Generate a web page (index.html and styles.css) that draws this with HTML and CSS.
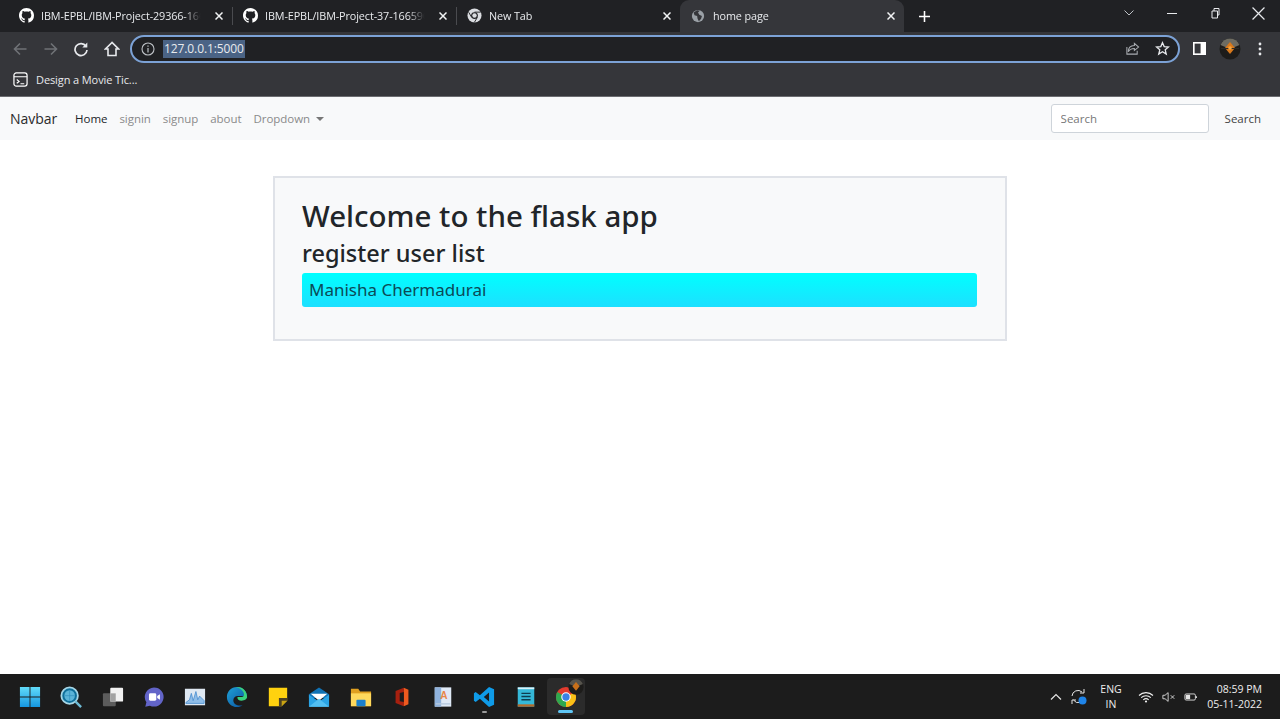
FILE: index.html
```html
<!DOCTYPE html>
<html lang="en">
<head>
<meta charset="utf-8">
<title>home page</title>
<link rel="stylesheet" href="styles.css">
</head>
<body>
<header class="chrome">
  <div class="tabstrip">
    <div class="tab">
      <svg class="fav" viewBox="0 0 16 16"><path fill="#fff" d="M8 0C3.58 0 0 3.58 0 8c0 3.54 2.29 6.53 5.47 7.59.4.07.55-.17.55-.38 0-.19-.01-.82-.01-1.49-2.01.37-2.53-.49-2.69-.94-.09-.23-.48-.94-.82-1.13-.28-.15-.68-.52-.01-.53.63-.01 1.08.58 1.23.82.72 1.21 1.87.87 2.33.66.07-.52.28-.87.51-1.07-1.78-.2-3.64-.89-3.64-3.95 0-.87.31-1.59.82-2.15-.08-.2-.36-1.02.08-2.12 0 0 .67-.21 2.2.82.64-.18 1.32-.27 2-.27s1.36.09 2 .27c1.53-1.04 2.2-.82 2.2-.82.44 1.1.16 1.92.08 2.12.51.56.82 1.27.82 2.15 0 3.07-1.87 3.75-3.65 3.95.29.25.54.73.54 1.48 0 1.07-.01 1.93-.01 2.2 0 .21.15.46.55.38A8.01 8.01 0 0 0 16 8c0-4.42-3.58-8-8-8z"/></svg>
      <span class="tab-title">IBM-EPBL/IBM-Project-29366-1665</span>
      <svg class="tab-x" viewBox="0 0 8 8"><path d="M.5.5l7 7M7.500.5l-7 7" stroke="#f1f3f4" stroke-width="1.500"/></svg>
    </div>
    <div class="tab tab-sep">
      <svg class="fav" viewBox="0 0 16 16"><path fill="#fff" d="M8 0C3.58 0 0 3.58 0 8c0 3.54 2.29 6.53 5.47 7.59.4.07.55-.17.55-.38 0-.19-.01-.82-.01-1.49-2.01.37-2.53-.49-2.69-.94-.09-.23-.48-.94-.82-1.13-.28-.15-.68-.52-.01-.53.63-.01 1.08.58 1.23.82.72 1.21 1.87.87 2.33.66.07-.52.28-.87.51-1.07-1.78-.2-3.64-.89-3.64-3.95 0-.87.31-1.59.82-2.15-.08-.2-.36-1.02.08-2.12 0 0 .67-.21 2.2.82.64-.18 1.32-.27 2-.27s1.36.09 2 .27c1.53-1.04 2.2-.82 2.2-.82.44 1.1.16 1.92.08 2.12.51.56.82 1.27.82 2.15 0 3.07-1.87 3.75-3.65 3.95.29.25.54.73.54 1.48 0 1.07-.01 1.93-.01 2.2 0 .21.15.46.55.38A8.01 8.01 0 0 0 16 8c0-4.42-3.58-8-8-8z"/></svg>
      <span class="tab-title">IBM-EPBL/IBM-Project-37-1665900</span>
      <svg class="tab-x" viewBox="0 0 8 8"><path d="M.5.5l7 7M7.500.5l-7 7" stroke="#f1f3f4" stroke-width="1.500"/></svg>
    </div>
    <div class="tab tab-sep">
      <svg class="fav" viewBox="0 0 16 16"><circle cx="8" cy="8" r="7.5" fill="#dadce0"/><circle cx="8" cy="8" r="3.6" fill="#202124"/><circle cx="8" cy="8" r="2.4" fill="#dadce0"/><path d="M8 4.4h6.5M5 10 1.8 4.5M11 10l-3.2 5.4" stroke="#202124" stroke-width="1"/></svg>
      <span class="tab-title">New Tab</span>
      <svg class="tab-x" viewBox="0 0 8 8"><path d="M.5.5l7 7M7.500.5l-7 7" stroke="#f1f3f4" stroke-width="1.500"/></svg>
    </div>
    <div class="tab tab-active">
      <svg class="fav" viewBox="0 0 16 16"><circle cx="8" cy="8" r="7" fill="#9aa0a6"/><path d="M7 1.5 3 4l1 3 3 1 .5 3 1.500 3 2.500-3 1-3-3-1.500L8 4l2-2z" fill="#35363a"/></svg>
      <span class="tab-title">home page</span>
      <svg class="tab-x" viewBox="0 0 8 8"><path d="M.5.5l7 7M7.500.5l-7 7" stroke="#f1f3f4" stroke-width="1.500"/></svg>
    </div>
    <svg class="new-tab" viewBox="0 0 12 12"><path d="M6 0v12M0 6h12" stroke="#fff" stroke-width="1.700"/></svg>
    <div class="win-controls">
      <svg viewBox="0 0 12 12" class="win-ic"><path d="M1.500 3.500 6 8l4.500-4.500" fill="none" stroke="#bdc1c6" stroke-width="1"/></svg>
      <svg viewBox="0 0 12 12" class="win-ic"><path d="M1 6.500h10" stroke="#e8eaed" stroke-width="1"/></svg>
      <svg viewBox="0 0 12 12" class="win-ic"><path d="M3 4h5.500v7H3zM5 4V1.500h5V8H8.500" fill="none" stroke="#e8eaed" stroke-width="1"/></svg>
      <svg viewBox="0 0 12 12" class="win-ic win-close"><path d="M.5.5l11 11M11.500.5l-11 11" stroke="#e8eaed" stroke-width="1.100"/></svg>
    </div>
  </div>
  <div class="toolbar">
    <svg class="tool" viewBox="0 0 16 16"><path d="M14.500 8h-12M8 2.500 2.500 8 8 13.500" fill="none" stroke="#6f7276" stroke-width="1.600"/></svg>
    <svg class="tool" viewBox="0 0 16 16"><path d="M1.500 8h12M8 2.500 13.500 8 8 13.500" fill="none" stroke="#6f7276" stroke-width="1.600"/></svg>
    <svg class="tool" viewBox="0 0 16 16"><path d="M13 5.200A6 6 0 1 0 14 9" fill="none" stroke="#e8eaed" stroke-width="1.700"/><path d="M14.300 1.500v5h-5z" fill="#e8eaed"/></svg>
    <svg class="tool" viewBox="0 0 16 16"><path d="M8 1.500 1.500 8H4v6.500h8V8h2.500z" fill="none" stroke="#e8eaed" stroke-width="1.600"/></svg>
    <div class="omnibox">
      <svg class="info" viewBox="0 0 14 14"><circle cx="7" cy="7" r="6" fill="none" stroke="#bdc1c6" stroke-width="1.100"/><path d="M7 6v4.500M7 3.500v1.300" stroke="#bdc1c6" stroke-width="1.200"/></svg>
      <span class="url">127.0.0.1:5000</span>
      <svg class="omni-ic" viewBox="0 0 16 16"><path d="M10 2.500 14.500 6.500 10 10V8C6.500 8 4.500 9.500 3.500 11.500 3.500 7.500 6 5 10 4.800zM2 6.500V14h11v-3.500" fill="none" stroke="#a8acb1" stroke-width="1.100"/></svg>
      <svg class="omni-ic" viewBox="0 0 16 16"><path d="M8 1.800 9.800 6l4.600.4-3.500 3 1.100 4.500L8 11.500 4 13.900l1.100-4.500-3.500-3L6.200 6z" fill="none" stroke="#e8eaed" stroke-width="1.400"/></svg>
    </div>
    <svg class="panel" viewBox="0 0 12 12"><rect width="12" height="12" fill="#fff"/><rect x="1.500" y="1.500" width="5.500" height="9" fill="#35363a"/></svg>
    <svg class="avatar" viewBox="0 0 22 22"><circle cx="11" cy="11" r="10.500" fill="#1d1c1a"/><path d="M11 .5A10.500 10.500 0 0 1 20.500 7L11 11 1.500 7A10.500 10.500 0 0 1 11 .5z" fill="#6e6c62"/><path d="M11 4l5 6-5 6-5-6z" fill="#d9791c"/><path d="M2 10.500h18" stroke="#2b2a26" stroke-width="1"/><circle cx="11" cy="10" r="1.800" fill="#f4a63e"/></svg>
    <svg class="kebab" viewBox="0 0 4 14"><circle cx="2" cy="2" r="1.400" fill="#e8eaed"/><circle cx="2" cy="7" r="1.400" fill="#e8eaed"/><circle cx="2" cy="12" r="1.400" fill="#e8eaed"/></svg>
  </div>
  <div class="bookmarks">
    <svg class="bm-ic" viewBox="0 0 16 16"><rect x="1" y="1" width="14" height="14" rx="2.500" fill="none" stroke="#fff" stroke-width="1.300"/><path d="M1 5h14M4 8l2.500 2L4 12M8 12.500h4" fill="none" stroke="#fff" stroke-width="1.200"/></svg>
    <span>Design a Movie Tic...</span>
  </div>
</header>

<nav class="navbar">
  <a class="brand">Navbar</a>
  <ul class="nav">
    <li class="active">Home</li>
    <li>signin</li>
    <li>signup</li>
    <li>about</li>
    <li class="dropdown">Dropdown<i class="caret"></i></li>
  </ul>
  <form class="search">
    <input class="search-input" placeholder="Search">
    <button class="search-btn" type="button">Search</button>
  </form>
</nav>

<main class="page">
  <section class="card">
    <h1>Welcome to the flask app</h1>
    <h2>register user list</h2>
    <div class="user">Manisha Chermadurai</div>
  </section>
</main>

<footer class="taskbar">
  <div class="apps">
    <div class="app"><svg viewBox="0 0 24 24"><defs><linearGradient id="winA" x1="0" y1="0" x2="0" y2="1"><stop offset="0" stop-color="#62dcfa"/><stop offset="1" stop-color="#1596e0"/></linearGradient></defs><path fill="url(#winA)" d="M1 1h10.500v10.500H1zM12.500 1H23v10.500H12.500zM1 12.500h10.500V23H1zM12.500 12.500H23V23H12.500z"/></svg></div>
    <div class="app"><svg viewBox="0 0 24 24"><circle cx="10.500" cy="10.500" r="9" fill="#0f6f9a" stroke="#a6d6e6" stroke-width="2"/><circle cx="10.500" cy="10.500" r="5.800" fill="#5bb4d8"/><path d="M5 10.500h11M10.500 5v11" stroke="#2f8fbc" stroke-width=".7"/><path d="M16.500 16.500 23 23" stroke="#6fbcd6" stroke-width="2.600"/></svg></div>
    <div class="app"><svg viewBox="0 0 24 24"><rect x="1" y="8" width="14" height="14" rx="1" fill="#5c5c5c"/><rect x="9" y="2" width="14" height="15" rx="1" fill="#f1f1f1"/><path d="M9 8h6v9H9z" fill="#a2a2a2"/></svg></div>
    <div class="app"><svg viewBox="0 0 24 24"><path fill="#6264c8" d="M12 1.500a10.500 10.500 0 1 1-4.500 20l-5 1 1.200-4.800A10.500 10.500 0 0 1 12 1.500z"/><rect x="6.500" y="8" width="8" height="8" rx="1.500" fill="#fff"/><path d="m15.500 11 3-2v6l-3-2z" fill="#fff"/></svg></div>
    <div class="app"><svg viewBox="0 0 24 24"><rect x="1" y="3" width="22" height="18" fill="#dfe8f2"/><path d="M2 18l4-3 2-7 2 8 3-10 2 9 2-4 5 5v3H2z" fill="#8fbde8" stroke="#3f86cc" stroke-width=".8"/></svg></div>
    <div class="app"><svg viewBox="0 0 24 24"><defs><linearGradient id="edgeA" x1="0" y1="0" x2="1" y2="1"><stop offset="0" stop-color="#1fa2d8"/><stop offset="1" stop-color="#0a4f9c"/></linearGradient></defs><path fill="url(#edgeA)" d="M12 1C5.500 1 1 6 1 12c0 6.500 5 11 11 11 2.500 0 4.500-.7 6-2-5 1.300-10-1-10-5.500 0-2 1.500-4 4-4.500 3-.5 6 0 11 .5C23 6 18.500 1 12 1z"/><path fill="#39d27f" d="M23 12c0 2-2.500 4-6 4-3 0-5-1.500-4.500-4h5c1.500 0 2.500-1.500 2-3.500C19 5 15 2.500 11 1.200c7-1 12 4.500 12 10.800z"/></svg></div>
    <div class="app"><svg viewBox="0 0 24 24"><path fill="#ffd20f" d="M2 2h20v14l-6 6H2z"/><path fill="#4b4124" d="M22 13v3l-6 6h-3v-9z"/><path fill="#c9a312" d="M16 16h6l-6 6z"/></svg></div>
    <div class="app"><svg viewBox="0 0 24 24"><path fill="#1173b5" d="M12 1.500 23 9v4H1V9z"/><path fill="#fff" d="M3 8.500h18L12 16z"/><path fill="#2aa4e6" d="M1 9.500 12 17 23 9.500V22.500H1z"/><path fill="#52bff2" d="M1 22.500 12 14l11 8.500z"/></svg></div>
    <div class="app"><svg viewBox="0 0 24 24"><path fill="#e0a020" d="M1 3h8l2 3h12v16H1z"/><path fill="#ffd95c" d="M1 8h22v14H1z"/><rect x="7" y="15" width="10" height="7" rx="1" fill="#1b80cc"/></svg></div>
    <div class="app"><svg viewBox="0 0 24 24"><path fill="#a8200f" d="M5 5.500 14 2v20l-9-3.500z"/><path fill="#ef5a1f" d="M14 2l5 2v16l-5 2z"/><path fill="#1c1c1c" d="M9.500 7.500 14 6.500v11l-4.500-1z"/></svg></div>
    <div class="app"><svg viewBox="0 0 24 24"><rect x="3" y="1.500" width="18" height="21" fill="#dfe9f6"/><rect x="3" y="1.500" width="7" height="21" fill="#8fb2dc"/><text class="wordmark" x="9" y="14">A</text><path d="M4 19.500h16" stroke="#b7c9de" stroke-width="1.500"/></svg></div>
    <div class="app app-dot"><svg viewBox="0 0 24 24"><path fill="#0f9be8" d="M17.500 1 23 3.500v17L17.500 23 7.500 13.800l-4.600 3.700L1 16.200V7.800l1.900-1.300 4.600 3.700zM17.500 7l-5.700 5 5.700 5z"/></svg></div>
    <div class="app"><svg viewBox="0 0 24 24"><rect x="3" y="1.500" width="18" height="21" fill="#35b8d8"/><rect x="3" y="20" width="18" height="2.500" fill="#b56a2a"/><rect x="3" y="1.500" width="18" height="2" fill="#d7f2fa"/><path d="M7 8h10M7 11.500h10M7 15h10" stroke="#0e3c50" stroke-width="1.500"/></svg></div>
    <div class="app app-open"><svg viewBox="0 0 24 24"><circle cx="12" cy="12" r="11" fill="#e33b2e"/><path d="M12 12 21.500 6.500A11 11 0 0 1 12 23z" fill="#fbc116"/><path d="M12 12 12 23A11 11 0 0 1 2.500 6.500z" fill="#2fa84f"/><circle cx="12" cy="12" r="5.200" fill="#fff"/><circle cx="12" cy="12" r="4" fill="#3b82e6"/></svg><svg class="app-badge" viewBox="0 0 22 22"><circle cx="11" cy="11" r="10.500" fill="#1d1c1a"/><path d="M11 .5A10.500 10.500 0 0 1 20.500 7L11 11 1.500 7A10.500 10.500 0 0 1 11 .5z" fill="#55534c"/><path d="M11 4l5 6-5 6-5-6z" fill="#c8701a"/></svg></div>
  </div>
  <div class="tray">
    <svg class="tray-ic" viewBox="0 0 12 12"><path d="M1 8.500 6 3.500l5 5" fill="none" stroke="#e4e4e4" stroke-width="1.200"/></svg>
    <svg class="tray-sync" viewBox="0 0 18 18"><path d="M2 8a6 6 0 0 1 10-4M14 1v4h-4M10 14.500A6 6 0 0 1 3.500 12M2 16v-4h4" fill="none" stroke="#e4e4e4" stroke-width="1"/><circle cx="12.500" cy="12.500" r="4" fill="#1f84e8"/></svg>
    <div class="lang">ENG<br>IN</div>
    <svg class="tray-ic wifi" viewBox="0 0 16 12"><path d="M1 4.500a10 10 0 0 1 14 0M3.200 6.700a7 7 0 0 1 9.600 0M5.300 8.800a4 4 0 0 1 5.400 0" fill="none" stroke="#f0f0f0" stroke-width="1.100"/><circle cx="8" cy="10.500" r="1.100" fill="#f0f0f0"/></svg>
    <svg class="tray-ic" viewBox="0 0 16 12"><path d="M1 4h2.500L7 1v10L3.500 8H1zM10 4l4 4M14 4l-4 4" fill="none" stroke="#e4e4e4" stroke-width="1"/></svg>
    <svg class="tray-ic" viewBox="0 0 16 12"><rect x="1" y="2.500" width="12" height="7" rx="1.500" fill="none" stroke="#e4e4e4"/><rect x="2" y="3.500" width="5" height="5" fill="#e4e4e4"/><path d="M14 5v2" stroke="#e4e4e4" stroke-width="1.500"/></svg>
    <div class="clock">08:59 PM<br>05-11-2022</div>
  </div>
</footer>
</body>
</html>
```
FILE: styles.css
```css
* { box-sizing: border-box; }
html, body { margin: 0; padding: 0; height: 719px; overflow: hidden; }
body { display: flex; flex-direction: column; background: #fff; font-family: "Open Sans", "Noto Sans", sans-serif; color: #212529; }

/* browser chrome */
.chrome { height: 97px; flex: none; background: #35363a; border-bottom: 1px solid #6b6c70; }
.tabstrip { height: 32px; background: #202124; display: flex; align-items: flex-end; padding-left: 8px; }
.tab { width: 224px; height: 32px; display: flex; align-items: center; padding: 0 5px 1px 11px; color: #e8eaed; font-size: 10.800px; letter-spacing: -.1px; position: relative; }
.tab-sep::before { content: ""; position: absolute; left: 0; top: 7px; height: 18px; width: 1px; background: #4a4b4f; }
.tab-active { background: #35363a; border-radius: 9px 9px 0 0; }
.tab-active .fav { width: 14px; height: 14px; margin-right: 8px; }
.fav { width: 15px; height: 15px; flex: none; margin-right: 7px; }
.tab-title { flex: 1; white-space: nowrap; overflow: hidden; -webkit-mask-image: linear-gradient(90deg, #000 84%, transparent 94%); mask-image: linear-gradient(90deg, #000 84%, transparent 94%); }
.tab-x { flex: none; width: 8px; height: 8px; margin: 0 4px 0 4px; }
.new-tab { width: 11px; height: 11px; margin: 0 0 10px 15px; flex: none; }
.win-controls { margin-left: auto; height: 32px; width: 172px; display: flex; align-items: center; justify-content: space-between; padding: 0 15px 6px 15px; }
.win-ic { width: 12px; height: 12px; }
.win-close { width: 13px; height: 13px; }

.toolbar { height: 32px; display: flex; align-items: center; padding: 1px 0 0 12px; }
.tool { width: 16px; height: 16px; flex: none; margin-right: 14.600px; }
.omnibox { width: 1050px; height: 28px; margin-left: -4.400px; background: #202124; border: 2px solid #7ca2d6; border-radius: 14px; display: flex; align-items: center; padding: 0 8px 0 9px; }
.info { width: 14px; height: 14px; flex: none; margin-right: 8px; }
.url { background: #4a6385; color: #e8eaed; font-size: 12px; line-height: 18px; padding: 0 1px; letter-spacing: -.1px; }
.omni-ic { width: 15px; height: 15px; flex: none; margin-left: 15px; }
.url + .omni-ic { margin-left: auto; }
.panel { width: 13px; height: 13px; flex: none; margin-left: 13px; }
.avatar { width: 22px; height: 22px; flex: none; margin-left: 13px; }
.kebab { width: 4px; height: 14px; flex: none; margin-left: 17px; }

.bookmarks { height: 32px; display: flex; align-items: center; padding: 0 0 2px 13px; color: #e8eaed; font-size: 11px; letter-spacing: -.1px; }
.bm-ic { width: 15px; height: 15px; margin-right: 8px; flex: none; }

/* page nav */
.navbar { flex: none; height: 43px; background: #f8f9fa; display: flex; align-items: center; padding: 0 19px 0 10px; font-size: 11.500px; letter-spacing: -.05px; }
.brand { font-size: 14px; color: #2a2a2a; margin-right: 18px; }
.nav { display: flex; gap: 12px; margin: 0; padding: 0; list-style: none; color: #8a8a8a; flex: 1; }
.active { color: #212529; }
.caret { display: inline-block; margin-left: 6px; vertical-align: 2px; border-top: 4px solid #777; border-left: 4px solid transparent; border-right: 4px solid transparent; }
.search { display: flex; align-items: center; gap: 16px; }
.search-input { width: 158px; height: 29px; border: 1px solid #ced4da; border-radius: 3px; background: #fff; padding: 0 9px; font: inherit; }
.search-input::placeholder { color: #777; opacity: 1; }
.search-btn { border: 0; background: none; padding: 0; font: inherit; color: #444; }

/* content */
.page { flex: 1; display: flex; justify-content: center; align-items: flex-start; padding-top: 36px; }
.card { width: 734px; height: 165px; background: #f8f9fa; border: 2px solid #dfe2e8; padding: 19px 28px 0 27px; font-family: "Noto Sans", "Open Sans", sans-serif; }
h1 { margin: 0 0 3px; font-size: 29.500px; font-weight: 500; line-height: 38px; color: #212529; }
h2 { margin: 0 0 4px; font-size: 23.500px; font-weight: 500; line-height: 31px; color: #212529; }
.user { height: 34px; background: linear-gradient(#00ffff, #1de0ff); border-radius: 3px; padding: 0 7px; font-size: 17px; line-height: 34px; color: #0b4a56; }

/* taskbar */
.taskbar { flex: none; height: 45px; background: #1c1c1c; display: flex; align-items: center; justify-content: space-between; padding: 0 18px 0 9.500px; color: #eee; }
.apps { display: flex; height: 45px; }
.app { width: 41.300px; height: 45px; display: flex; align-items: center; justify-content: center; position: relative; }
.app svg { width: 22px; height: 22px; }
.wordmark { font-size: 11px; font-family: "Liberation Sans", sans-serif; font-weight: 700; fill: #e8874a; }
.app-dot::after { content: ""; position: absolute; bottom: 6px; left: 18px; width: 5px; height: 2px; border-radius: 1px; background: #9a9a9a; }
.app-open { background: #2b2b2b; border-radius: 4px; height: 37px; margin-top: 4px; width: 38px; margin-left: 1px; }
.app-open::after { content: ""; position: absolute; bottom: 2px; left: 11px; width: 15px; height: 3px; border-radius: 2px; background: #5fc6f5; }
.app svg.app-badge { position: absolute; right: 1px; top: 1px; width: 16px; height: 16px; }
.tray { display: flex; align-items: center; font-size: 10.500px; line-height: 15px; text-align: center; }
.tray-ic { width: 14px; height: 12px; margin-right: 8px; flex: none; }
.tray-sync { width: 18px; height: 18px; margin: 0 10px 0 -1px; flex: none; }
.lang { width: 26px; margin-right: 14px; }
.wifi { width: 16px; }
.clock { margin-left: 0; text-align: right; width: 56px; }
```
